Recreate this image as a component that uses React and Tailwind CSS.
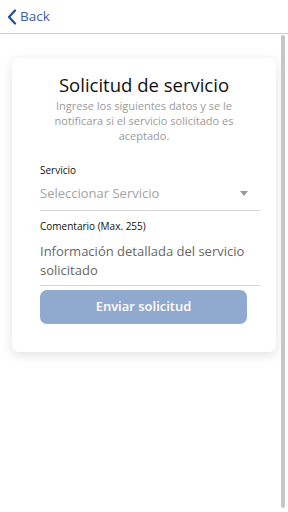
import React from 'react';

export default function App() {
  return (
    <div className="relative w-[288px] h-[512px] overflow-hidden bg-white" style={{ fontFamily: '"Open Sans", sans-serif' }}>
      <header className="h-[34px] flex items-center border-b border-[#cfcfcf] pl-[6px]">
        <button className="flex items-center gap-[2px] text-[#2f57a3]">
          <svg width="12" height="16" viewBox="0 0 12 16" fill="none">
            <path d="M9 1.5 L3 8 L9 14.5" stroke="#1f4f9e" strokeWidth="2.2" strokeLinecap="round" strokeLinejoin="round" />
          </svg>
          <span className="text-[13.5px] leading-none text-[#3a5ea8]">Back</span>
        </button>
      </header>

      <main className="pt-[24px] px-[12px]">
        <div className="w-[264px] rounded-[7px] bg-white shadow-[0_3px_12px_rgba(0,0,0,0.12)] pt-[14px] pb-[28px]">
          <h1 className="text-center text-[18.5px] leading-[26px] text-[#111]">Solicitud de servicio</h1>
          <p className="mx-auto w-[200px] text-center text-[11px] leading-[15px] text-[#9a9a9a]">
            Ingrese los siguientes datos y se le notificara si el servicio solicitado es aceptado.
          </p>

          <div className="pl-[28px] pr-[16px] mt-[20px]">
            <label className="block text-[10px] leading-[14px] text-[#111]">Servicio</label>
            <div className="flex items-center justify-between h-[34px] border-b border-[#d6d6d6] pr-[12px]">
              <span className="text-[13px] text-[#a3a3a3]">Seleccionar Servicio</span>
              <svg width="8" height="5" viewBox="0 0 8 5">
                <path d="M0 0 L8 0 L4 5 Z" fill="#9a9a9a" />
              </svg>
            </div>

            <label className="block mt-[8px] text-[10px] leading-[14px] text-[#111]">Comentario (Max. 255)</label>
            <div className="pt-[9px] pb-[5px] border-b border-[#d6d6d6] text-[13px] leading-[19px] text-[#666]">
              Información detallada del servicio solicitado
            </div>

            <button className="mt-[4px] w-[207px] h-[34px] rounded-[7px] bg-[#8fa9cf] text-white text-[13px] font-semibold">
              Enviar solicitud
            </button>
          </div>
        </div>
      </main>

      <div className="absolute right-[3px] top-[35px] w-[4px] h-[473px] rounded-full bg-[#c6c6c6]" />
    </div>
  );
}
